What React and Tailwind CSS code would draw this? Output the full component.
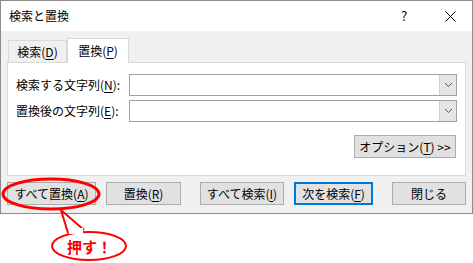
import React from "react";

const jp = { fontFamily: '"Noto Sans CJK JP", "Noto Sans", sans-serif' };

function Btn({ children, className = "", focused = false }) {
  return (
    <div
      className={`h-[23px] flex items-center justify-center bg-[#e1e1e1] text-[12px] text-black ${
        focused ? "border-2 border-[#0078d7]" : "border border-[#adadad]"
      } ${className}`}
    >
      {children}
    </div>
  );
}

function Combo() {
  return (
    <div className="flex-1 h-[22px] border border-[#a0a0a0] bg-white flex justify-end">
      <div className="w-[17px] h-full bg-[#e5e5e5] border-l border-[#d0d0d0] flex items-center justify-center">
        <svg width="9" height="6" viewBox="0 0 9 6">
          <path d="M1 1 L4.5 4.5 L8 1" fill="none" stroke="#555" strokeWidth="1" />
        </svg>
      </div>
    </div>
  );
}

const U = ({ c }) => <span className="underline underline-offset-2">{c}</span>;

export default function App() {
  return (
    <div className="relative w-[473px] h-[263px] bg-white" style={jp}>
      {/* Dialog */}
      <div className="w-[473px] h-[214px] border border-[#8c8c8c] bg-[#f0f0f0] flex flex-col">
        {/* Title bar */}
        <div className="h-[30px] bg-white flex items-center pl-[8px] text-[12px] text-black">
          <span className="flex-1">検索と置換</span>
          <span className="w-[46px] text-center text-[13px]">?</span>
          <span className="w-[46px] flex justify-center mr-[-1px]">
            <svg width="11" height="11" viewBox="0 0 11 11">
              <path d="M0.5 0.5 L10.5 10.5 M10.5 0.5 L0.5 10.5" stroke="#000" strokeWidth="1" />
            </svg>
          </span>
        </div>

        {/* Tabs */}
        <div className="flex items-end pl-[7px] pt-[7px] text-[12px]">
          <div className="w-[59px] h-[22px] border border-b-0 border-[#d9d9d9] bg-[#f0f0f0] flex items-center justify-center">
            検索(<U c="D" />)
          </div>
          <div className="relative w-[62px] h-[25px] border border-b-0 border-[#d9d9d9] bg-white flex items-center justify-center mb-[-1px] z-10">
            置換(<U c="P" />)
          </div>
        </div>

        {/* Panel */}
        <div className="mx-[6px] h-[114px] border border-[#d9d9d9] bg-white px-[8px] pt-[11px] text-[12px]">
          <div className="flex items-center h-[22px]">
            <span className="w-[113px]">検索する文字列(<U c="N" />):</span>
            <Combo />
          </div>
          <div className="flex items-center h-[22px] mt-[4px]">
            <span className="w-[113px]">置換後の文字列(<U c="E" />):</span>
            <Combo />
          </div>
          <div className="flex justify-end mt-[13px] pr-[1px]">
            <Btn className="w-[102px]">
              オプション(<U c="T" />) &gt;&gt;
            </Btn>
          </div>
        </div>

        {/* Bottom buttons */}
        <div className="flex items-center pl-[6px] pt-[6px]">
          <Btn className="w-[89px]">すべて置換(<U c="A" />)</Btn>
          <Btn className="w-[75px] ml-[10px]">置換(<U c="R" />)</Btn>
          <Btn className="w-[84px] ml-[19px]">すべて検索(<U c="I" />)</Btn>
          <Btn focused className="w-[79px] ml-[10px]">次を検索(<U c="F" />)</Btn>
          <Btn className="w-[74px] ml-[19px]">閉じる</Btn>
        </div>
      </div>

      {/* Red annotation */}
      <svg className="absolute left-0 top-0 pointer-events-none" width="473" height="263">
        <ellipse cx="51" cy="194" rx="48" ry="15" fill="none" stroke="#ff0000" strokeWidth="3" />
        <path
          d="M68 233 L61 210 L84 230"
          fill="none"
          stroke="#ff0000"
          strokeWidth="2"
          strokeLinejoin="miter"
        />
        <ellipse cx="89" cy="246" rx="37" ry="14" fill="#fff" stroke="#ff0000" strokeWidth="2" />
        <rect x="69" y="228" width="14" height="6" fill="#fff" />
      </svg>
      <div className="absolute left-[52px] top-[236px] w-[75px] h-[22px] flex items-center justify-center text-[15px] font-bold text-[#ff0000]">
        押す！
      </div>
    </div>
  );
}
